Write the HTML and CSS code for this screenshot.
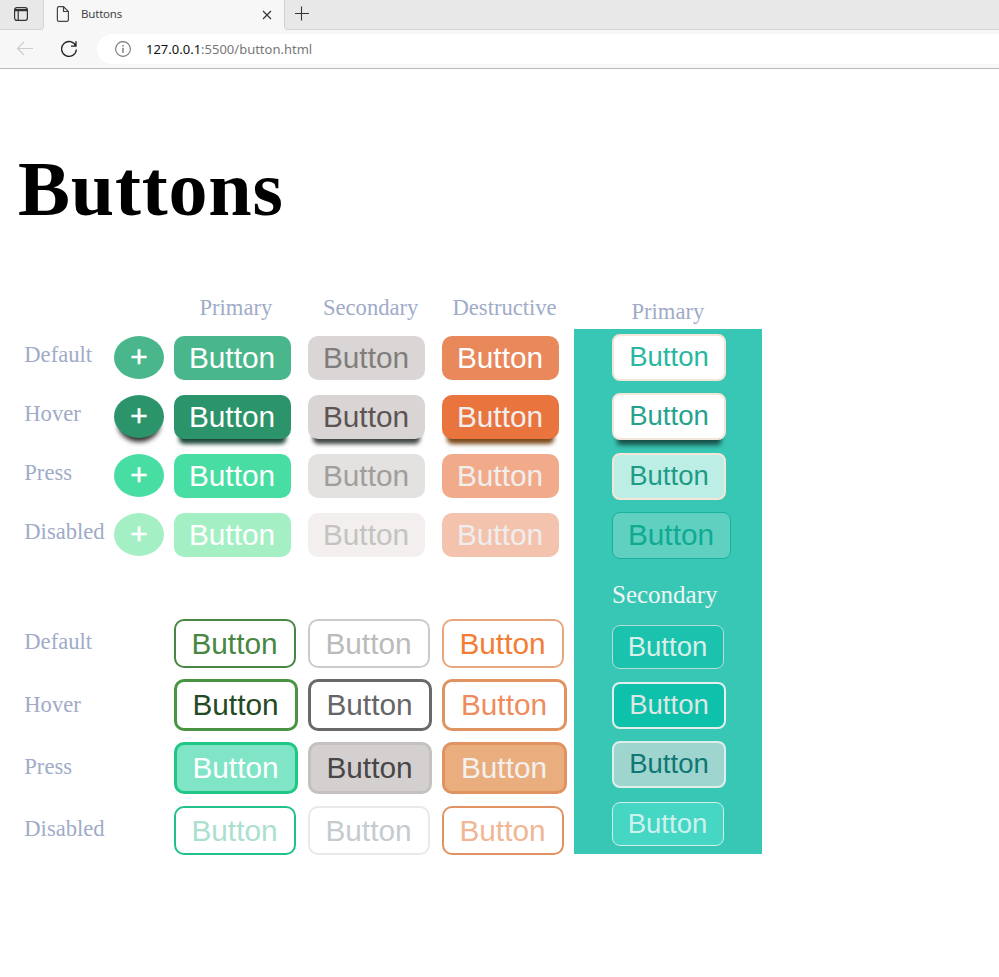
FILE: index.html
```html
<!DOCTYPE html>
<html lang="en">
<head>
<meta charset="utf-8">
<title>Buttons</title>
<link rel="stylesheet" href="styles.css">
</head>
<body>
<header class="browser">
  <div class="tabs">
    <div class="tab-menu">
      <svg width="16" height="16" viewBox="0 0 16 16" fill="none" stroke="#333"><rect x="1.6" y="1.6" width="12.8" height="12.8" rx="2.3" stroke-width="1.2"/><path d="M2 3.5H14M5.2 5V14" stroke-width="1.2"/><path d="M2 4.5H14" stroke-width="1.5"/></svg>
    </div>
    <div class="tab">
      <svg width="14" height="18" viewBox="0 0 14 18" fill="none" stroke="#444" stroke-width="1.2"><path d="M2.8 1.6H7.5L12.4 6.5V14.8Q12.4 16.4 10.8 16.4H2.8Q1.4 16.4 1.4 14.8V3.2Q1.4 1.6 2.8 1.6ZM7.5 1.6V6.5H12.4"/></svg>
      <span class="tab-title">Buttons</span>
      <svg class="close" width="10" height="10" viewBox="0 0 10 10" stroke="#333" stroke-width="1.2"><path d="M1 1L9 9M9 1L1 9"/></svg>
    </div>
    <div class="new-tab">
      <svg width="16" height="16" viewBox="0 0 16 16" stroke="#333" stroke-width="1.1"><path d="M1 7.5H15M7.5 .5V14.5"/></svg>
    </div>
  </div>
  <div class="toolbar">
    <svg class="back" width="18" height="16" viewBox="0 0 18 16" fill="none" stroke="#ccc" stroke-width="1.1"><path d="M17 7.5H1.5M8 1L1.5 7.5L8 14"/></svg>
    <svg class="reload" width="18" height="18" viewBox="0 0 18 18" fill="none" stroke="#222" stroke-width="1.3"><path d="M15.9 6.2A7.4 7.4 0 1 0 16.4 9.5M16 1.2V6.2H11"/></svg>
    <div class="address">
      <svg width="18" height="18" viewBox="0 0 18 18" fill="none" stroke="#777" stroke-width="1.1"><circle cx="9" cy="9" r="7.4"/><path d="M9 7.8V13M9 5V6.6" stroke-width="1.4"/></svg>
      <span class="url"><b>127.0.0.1</b>:5500/button.html</span>
    </div>
  </div>
</header>
<main>
  <h1>Buttons</h1>
  <div class="showcase">
    <section class="board">
      <span class="head primary">Primary</span>
      <span class="head secondary">Secondary</span>
      <span class="head destructive">Destructive</span>

      <span class="label">Default</span>
      <button class="add add-default">+</button>
      <button class="btn p-default">Button</button>
      <button class="btn s-default">Button</button>
      <button class="btn d-default">Button</button>

      <span class="label">Hover</span>
      <button class="add add-hover">+</button>
      <button class="btn p-hover">Button</button>
      <button class="btn s-hover">Button</button>
      <button class="btn d-hover">Button</button>

      <span class="label">Press</span>
      <button class="add add-press">+</button>
      <button class="btn p-press">Button</button>
      <button class="btn s-press">Button</button>
      <button class="btn d-press">Button</button>

      <span class="label">Disabled</span>
      <button class="add add-disabled">+</button>
      <button class="btn p-disabled">Button</button>
      <button class="btn s-disabled">Button</button>
      <button class="btn d-disabled">Button</button>

      <span class="label low">Default</span>
      <button class="btn line po-default">Button</button>
      <button class="btn line so-default">Button</button>
      <button class="btn line do-default">Button</button>

      <span class="label lower">Hover</span>
      <button class="btn thick po-hover">Button</button>
      <button class="btn thick so-hover">Button</button>
      <button class="btn thick wide do-hover">Button</button>

      <span class="label press">Press</span>
      <button class="btn thick po-press">Button</button>
      <button class="btn thick so-press">Button</button>
      <button class="btn thick wide do-press">Button</button>

      <span class="label low">Disabled</span>
      <button class="btn line po-disabled">Button</button>
      <button class="btn line so-disabled">Button</button>
      <button class="btn line do-disabled">Button</button>
    </section>
    <section class="inverse">
      <span class="inverse-head">Primary</span>
      <div class="panel">
        <button class="inv ip-default">Button</button>
        <button class="inv ip-hover">Button</button>
        <button class="inv ip-press">Button</button>
        <button class="inv ip-disabled">Button</button>
        <span class="panel-head">Secondary</span>
        <button class="inv thin is-default">Button</button>
        <button class="inv is-hover">Button</button>
        <button class="inv is-press">Button</button>
        <button class="inv thin is-disabled">Button</button>
      </div>
    </section>
  </div>
</main>
</body>
</html>
```
FILE: styles.css
```css
* { box-sizing: border-box; }
body { margin: 0; background: #fff; font-family: "Liberation Serif", serif; }
svg { display: block; flex: none; }

.browser { height: 69px; background: #f7f7f7; border-bottom: 1px solid #b9b9b9; font-family: "Noto Sans", sans-serif; }
.tabs { display: flex; height: 30px; background: #f7f7f7; }
.tab-menu { width: 44px; height: 30px; padding: 6px 0 0 13px; background: #e8e8e8; border-bottom: 1px solid #d4d4d4; border-right: 1px solid #d4d4d4; border-bottom-right-radius: 4px; }
.tab { display: flex; width: 240px; height: 30px; padding: 5px 12px 0 12px; }
.tab-title { margin-left: 11px; font-size: 11.5px; line-height: 18px; color: #444; letter-spacing: -.2px; }
.close { margin: 5px 0 0 auto; }
.new-tab { flex: 1; height: 30px; padding: 6px 0 0 9px; background: #e8e8e8; border-left: 1px solid #d0d0d0; border-bottom: 1px solid #d4d4d4; border-bottom-left-radius: 4px; }
.toolbar { display: flex; height: 38px; padding-left: 16px; }
.back { margin-top: 11px; }
.reload { margin: 10px 0 0 26px; }
.address { display: flex; flex: 1; height: 30px; margin: 4px 0 0 19px; padding: 6px 0 0 17px; background: #fff; border-radius: 15px 0 0 15px; }
.url { margin-left: 14px; font-size: 13px; line-height: 18px; color: #777; white-space: nowrap; }
.url b { font-weight: 400; color: #111; }

h1 { margin: 73px 0 0 18px; height: 148px; font-size: 78px; line-height: 94px; letter-spacing: .8px; font-weight: 700; color: #000; }
.showcase { display: flex; }
.board {
  display: grid; width: 574px; padding: 0 0 0 24px; align-items: start; justify-items: start;
  grid-template-columns: 90px 60px 134px 134px 132px;
  grid-template-rows: 46px 59px 59px 59px 106px 60px 63px 64px 49px;
}
.head, .label, .inverse-head { font-size: 22.6px; line-height: 26px; color: #a0abc8; }
.head { margin-top: 5px; }
.primary { grid-column: 3; margin-left: 25.5px; }
.secondary { margin-left: 15px; }
.destructive { margin-left: 10.5px; }
.label { grid-column: 1; margin: 6px 0 0 .3px; }
.low { margin-top: 10px; }
.lower { margin-top: 13px; }
.press { margin-top: 12px; }

button { margin: 0; padding: 0; border: 0; font-family: "Liberation Sans", sans-serif; font-size: 29.8px; font-weight: 400; text-align: center; }
.add { width: 50px; height: 43px; padding-bottom: 2px; border-radius: 50%; color: #fff; line-height: 41px; -webkit-text-stroke: .5px #fff; }
.add-default { background: #49b78b; }
.add-hover { background: #2b946a; box-shadow: 0 8px 5px -4px #333; }
.add-press { background: #48dea3; }
.add-disabled { background: #a4f0c4; }
.btn { width: 117px; height: 44px; padding-right: 1px; border-radius: 10px; }
.line { width: 122px; height: 49px; border: 2px solid; background: #fff; }
.thick { width: 124px; height: 52px; border: 3px solid; background: #fff; }
.wide { width: 125px; }
.po-default, .po-hover, .po-press, .po-disabled { grid-column: 3; }

.p-default { background: #49b78b; color: #fff; }
.s-default { background: #dad6d5; color: #807d7c; }
.d-default { background: #e8885b; color: #fff; }
.p-hover { background: #2b946a; color: #fff; box-shadow: 0 10px 4px -5px #1f4739; }
.s-hover { background: #d9d5d4; color: #5d5453; box-shadow: 0 10px 4px -5px #414646; }
.d-hover { background: #e9743e; color: #f1eeee; box-shadow: 0 10px 4px -5px #7c4a1a; }
.p-press { background: #48dea3; color: #fff; }
.s-press { background: #e3e2e0; color: #a19d9c; }
.d-press { background: #f1ab8a; color: #f1eeee; }
.p-disabled { background: #a4f0c4; color: #fff; }
.s-disabled { background: #f2efee; color: #c4c3c2; }
.d-disabled { background: #f4c3ad; color: #efeded; }

.po-default { border-color: #488743; color: #488743; }
.so-default { border-color: #c9cccc; color: #bbb; }
.do-default { border-color: #e9a77f; color: #f47d35; }
.po-hover { border-color: #489442; color: #234a22; }
.so-hover { border-color: #696969; color: #666; }
.do-hover { border-color: #e09260; color: #ed8c5d; }
.po-press { border-color: #20c684; background: #80e5c6; color: #fff; }
.so-press { border-color: #c5c1c0; background: #d4d0cf; color: #484646; }
.do-press { border-color: #e09260; background: #eaae7e; color: #f3f0f0; }
.po-disabled { border-color: #20c18b; color: #acdfd0; }
.so-disabled { border-color: #e9e9e9; color: #c5cccf; }
.do-disabled { border-color: #e09260; color: #f1b694; }

.inverse { width: 188px; }
.inverse-head { display: block; height: 39px; padding: 9px 0 0 57.5px; }
.panel {
  display: grid; height: 525px; padding: 5px 0 8px 38px; background: #39c7b5; align-items: start; justify-items: start;
  grid-template-rows: 59px 60px 59px 67px 46px 57px 59px 61px 44px;
}
.panel-head { margin-top: 1px; font-size: 25px; line-height: 30px; color: #eff5f3; }
.inv { width: 114px; height: 47px; padding-bottom: 2px; border: 2px solid #f1e6d8; border-radius: 8px; font-size: 27.5px; }
.thin { width: 112px; height: 44px; padding: 0 1px 0 0; border-width: 1px; }
.ip-default { background: #fff; color: #28b7a0; }
.ip-hover { background: #fff; color: #25a28e; box-shadow: 0 10px 5px -5px #174f47; }
.ip-press { background: #bdeee6; color: #1d9b87; }
.ip-disabled { width: 119px; padding-right: 1px; border: 1px solid #19b09e; background: #60d0c1; color: #10aa92; font-size: 29.8px; }
.is-default { border-color: #b5ddd5; background: #1bc2ad; color: #d8f0e9; }
.is-hover { border-color: #e4efed; background: #0dc1aa; color: #dfe6e4; }
.is-press { padding-bottom: 1px; border-color: #e0eeeb; background: #9fd5cf; color: #0f7774; }
.is-disabled { border-color: #d1efea; background: #46d6c4; color: #cdf2ee; }
```
